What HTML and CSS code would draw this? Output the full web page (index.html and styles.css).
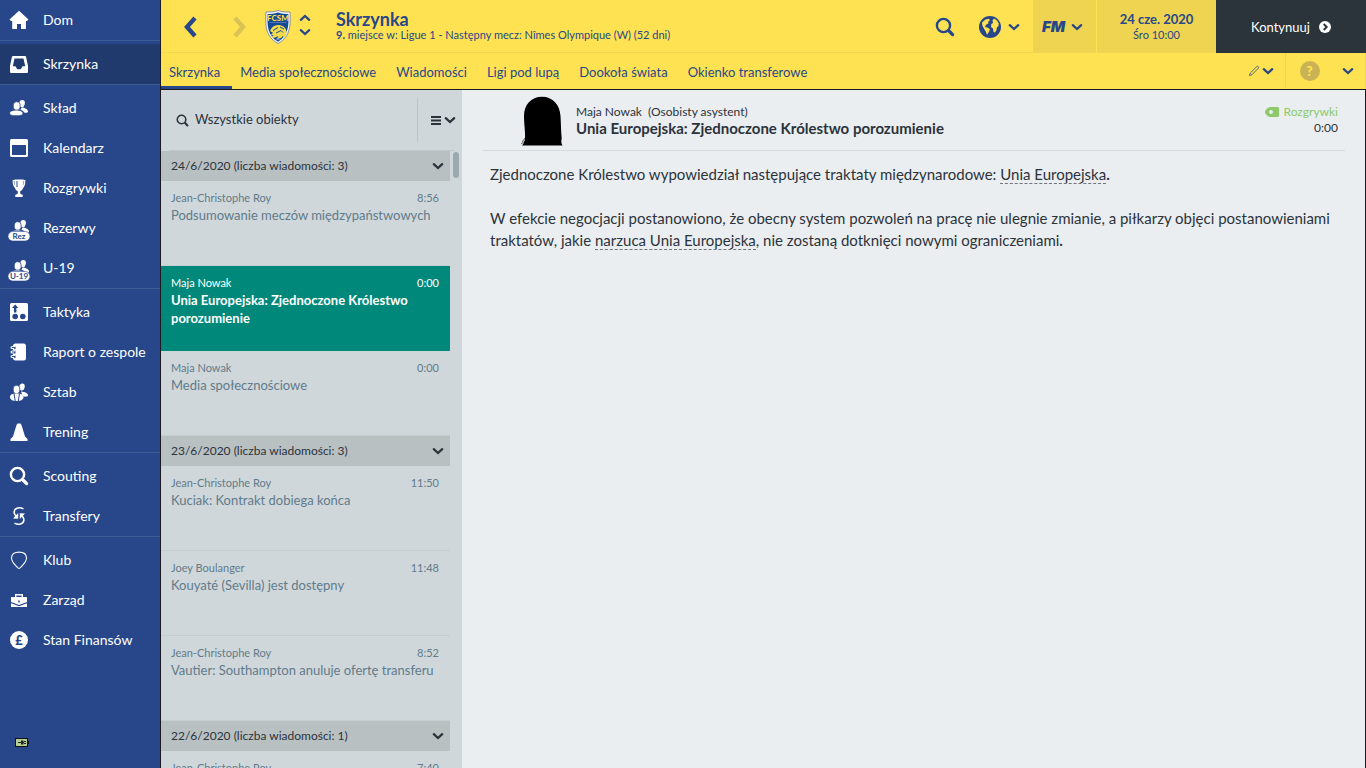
FILE: index.html
```
<!DOCTYPE html>
<html lang="pl">
<head>
<meta charset="UTF-8">
<meta name="viewport" content="width=device-width, initial-scale=1.0">
<title>Skrzynka</title>
<link rel="stylesheet" href="styles.css">
</head>
<body>

<svg class="sprite" aria-hidden="true">
    <symbol id="chevron" viewBox="0 0 14 14"><path d="M2.800 5.200L7 9l4.200-3.800" fill="none" stroke="currentColor" stroke-width="2.300" stroke-linecap="round"/></symbol>
    <symbol id="lens" viewBox="0 0 20 20"><circle cx="8.500" cy="8.500" r="6.600" fill="none" stroke="currentColor" stroke-width="2.400"/><path d="M14 14l3.600 3.600" stroke="currentColor" stroke-width="3.200" stroke-linecap="round"/></symbol>
    <symbol id="people" viewBox="0 0 20 20">
        <ellipse cx="13" cy="5.600" rx="2.800" ry="3.600" transform="rotate(12 13 5.600)"/>
        <path d="M12.500 9.500c3 0 6.500 1.800 6.500 4.200 0 1-1.800 1.200-3.500 1-1-1.600-2.400-2.600-4-3z"/>
        <ellipse cx="7.700" cy="8" rx="3.500" ry="4.300" stroke="#27478a" stroke-width="0.800"/>
        <path d="M.8 15.200c0-2 2.800-3 6.500-3s6.500 1 6.500 3-2.800 2.400-6.500 2.400-6.500-.4-6.500-2.400z" stroke="#27478a" stroke-width="0.500"/>
    </symbol>
</svg>

<div class="app">
    <nav class="sidebar">
        <ul class="nav-group">
            <li><a href="#"><svg viewBox="0 0 20 20"><path d="M10 .8L.5 9.500 2 11h1.200v7.400c0 .5.200.7.700.7H8v-5h4v5h4.200c.5 0 .7-.2.700-.7V11H18l1.500-1.500z"/></svg>Dom</a></li>
        </ul>
        <ul class="nav-group">
            <li><a class="active" href="#"><svg viewBox="0 0 20 20"><path fill-rule="evenodd" d="M4.200 2h11.600c.8 0 1.200.4 1.300 1.100L19 12v5.500c0 1-.5 1.500-1.500 1.500h-15C1.500 19 1 18.500 1 17.500V12l1.900-8.900C3 2.400 3.500 2 4.200 2zM5.500 4.500L3.800 12.300h2.700l1.700 3h3.600l1.700-3h2.700L14.500 4.500z"/></svg>Skrzynka</a></li>
        </ul>
        <ul class="nav-group">
            <li><a href="#"><svg><use href="#people"/></svg>Skład</a></li>
            <li><a href="#"><svg viewBox="0 0 20 20"><path fill-rule="evenodd" d="M3 1h14c1.400 0 2 .6 2 2v14c0 1.400-.6 2-2 2H3c-1.400 0-2-.6-2-2V3c0-1.400.6-2 2-2zm0 6v10h14V7z"/></svg>Kalendarz</a></li>
            <li><a href="#"><svg viewBox="0 0 20 20"><path d="M5.500 1.500h9v6c0 3-1.500 5-3.300 5.800V15c0 1 1 1.400 2.500 1.700V19H6.300v-2.300c1.500-.3 2.500-.7 2.500-1.700v-1.700C7 12.500 5.500 10.500 5.500 7.500z"/><path d="M6 2.500H4.200c0 4 .8 6.700 3.500 8M14 2.500h1.800c0 4-.8 6.700-3.500 8" fill="none" stroke="#fff" stroke-width="1.200"/><path d="M8 3v6" stroke="#27478a"/></svg>Rozgrywki</a></li>
            <li><a href="#"><svg class="tagged" viewBox="0 0 24 24"><use href="#people" x="3" y="0" width="20" height="20"/><rect x="1" y="13.500" width="22" height="9.500" rx="4.700" stroke="#27478a" stroke-width=".6"/><text x="12" y="21">Rez</text></svg>Rezerwy</a></li>
            <li><a href="#"><svg class="tagged" viewBox="0 0 24 24"><use href="#people" x="3" y="0" width="20" height="20"/><rect x="1" y="13.500" width="22" height="9.500" rx="4.700" stroke="#27478a" stroke-width=".6"/><text x="12" y="21">U-19</text></svg>U-19</a></li>
        </ul>
        <ul class="nav-group">
            <li><a href="#"><svg viewBox="0 0 20 20"><rect x="1" y="1" width="18" height="18" rx="1.500"/><g fill="#27478a"><circle cx="6.200" cy="14.500" r="2.800"/><circle cx="13.800" cy="14.500" r="2.800"/><path d="M6.200 2.500L3 6h2v4.500h2.400V6h2z"/></g></svg>Taktyka</a></li>
            <li><a href="#"><svg viewBox="0 0 20 20"><rect x="4" y="1.500" width="13" height="17" rx="2.500"/><g fill="none" stroke="#27478a" stroke-width="3"><path d="M2 5.500h4.500M2 10h4.500M2 14.500h4.500"/></g><g fill="none" stroke="#fff" stroke-width="1.100"><path d="M6.500 4.500H3.200c-1.500 0-1.500 2 0 2h2M6.500 9H3.200c-1.500 0-1.500 2 0 2h2M6.500 13.500H3.200c-1.500 0-1.500 2 0 2h2"/></g></svg>Raport o zespole</a></li>
            <li><a href="#"><svg viewBox="0 0 20 20"><ellipse cx="13" cy="5" rx="2.700" ry="3.600" transform="rotate(12 13 5)"/><path d="M12 9.500c4 .5 7.300 1.500 7 4.500-2.200 1-4 .8-5.500-.2z"/><ellipse cx="7.500" cy="7.500" rx="3.300" ry="4.200" stroke="#27478a" stroke-width=".8"/><path d="M1 15c0-2.500 2.500-3.600 6.500-3.600S14.500 12.500 14.500 15 12 19 7.700 19 1 17.500 1 15z"/><path d="M5 11.500l1.200 7.500M10.500 11.500L9.300 19" stroke="#27478a" stroke-width="1"/></svg>Sztab</a></li>
            <li><a href="#"><svg viewBox="0 0 20 20"><path d="M8.500 1.500h3l1 1.500 3.500 11.500 2.500 2.500v2h-17v-2L4 14.500 7.500 3z"/></svg>Trening</a></li>
        </ul>
        <ul class="nav-group">
            <li><a href="#"><svg><use href="#lens"/></svg>Scouting</a></li>
            <li><a href="#"><svg viewBox="0 0 20 20"><path d="M14.500 2.800C10 .2 4.500 2.500 5.200 7c.3 1.500 1 2.500 2.500 4M5.500 17.200c4.500 2.600 10 .3 9.300-4.200-.3-1.500-1-2.500-2.500-4" fill="none" stroke="#fff" stroke-width="1.500"/><path d="M4 12.500l5.200.2V7zM10.800 13V7.300l5.200.2z"/></svg>Transfery</a></li>
        </ul>
        <ul class="nav-group last">
            <li><a href="#"><svg viewBox="0 0 20 20"><path d="M10 2.100C5.500 2.100 2.500 4 2.500 8c0 4.500 4.500 7.500 6 9.500.8 1.100 2.200 1.100 3 0 1.500-2 6-5 6-9.500C17.500 4 14.500 2.100 10 2.100z" fill="none" stroke="#fff" stroke-width="1.100"/></svg>Klub</a></li>
            <li><a href="#"><svg viewBox="0 0 20 20"><path d="M6.700 7.500V4.700h6.600v2.800" fill="none" stroke="#fff" stroke-width="1.400"/><path d="M3 7h14c.6 0 1 .4 1 1v4l-8 3-8-3V8c0-.6.400-1 1-1zM2 13.300l8 2.900 8-2.900V17H2z"/><path d="M10 10.500v2" stroke="#27478a" stroke-width="1.500"/></svg>Zarząd</a></li>
            <li><a href="#"><svg viewBox="0 0 20 20"><circle cx="10" cy="10" r="9"/><text class="pound" x="10" y="14.500">£</text></svg>Stan Finansów</a></li>
        </ul>
        <svg class="battery" viewBox="0 0 14 9"><rect x=".5" y=".5" width="12" height="8" fill="#b4cf94" stroke="#111"/><path d="M13 3h1v3h-1z" fill="#111"/><path d="M3 4.500h3M9 3.500h2M9 5.500h2M6 4.500h3" stroke="#222"/><path d="M6 2.500h2.500v4H6z" fill="#222"/></svg>
    </nav>

    <div class="page">
        <header class="topbar">
            <button class="back" aria-label="Wstecz"><svg viewBox="0 0 16 24"><path d="M13 3L5 12l8 9" fill="none" stroke="currentColor" stroke-width="4.400"/></svg></button>
            <button class="forward" aria-label="Dalej"><svg viewBox="0 0 16 24"><path d="M3 3l8 9-8 9" fill="none" stroke="currentColor" stroke-width="4.400"/></svg></button>
            <svg class="crest" viewBox="0 0 26 34">
                <path d="M13 .5C9 2 5 2 1 2c-.8 12-.8 25 12 31.500C25.800 27 25.800 14 25 2c-4 0-8 0-12-1.500z" fill="#f4f6fa" stroke="#6c7c9d" stroke-width=".8"/>
                <path d="M13 2.500C9.500 3.600 6 4 2.700 4 2 15 2.500 26 13 31.700 23.500 26 24 15 23.300 4 20 4 16.500 3.600 13 2.500z" fill="#174a94"/>
                <text x="13" y="10.500">FCSM</text>
                <path d="M4.500 12.500h17" stroke="#4d78b5"/>
                <path d="M5 21c1.500-4.500 5-6.500 9-6 4 .3 7 3 7.500 6.500.2 3-1 5.500-3.500 7.500l.3-3.500-2.300 2.500-4 .5 1.500-2.500-4 1.800-3.500-.3 2.800-2.500-3.300.2 2.500-2.500z" fill="#f3dc4b"/>
                <path d="M8 20.500l5-3M11 23l5-2.500 2 2M15 17l4 2" stroke="#174a94" fill="none"/>
                <path d="M11.500 29h3" stroke="#d8dde8"/>
            </svg>
            <div class="stepper">
                <button aria-label="Poprzedni"><svg class="up"><use href="#chevron"/></svg></button>
                <button aria-label="Następny"><svg><use href="#chevron"/></svg></button>
            </div>
            <div class="heading">
                <h1>Skrzynka</h1>
                <p><b>9.</b> miejsce w: Ligue 1 - Następny mecz: Nîmes Olympique (W) (52 dni)</p>
            </div>
            <button class="search" aria-label="Szukaj"><svg><use href="#lens"/></svg></button>
            <button class="world" aria-label="Świat">
                <svg class="globe" viewBox="0 0 22 22"><circle cx="11" cy="11" r="11" fill="#27478a"/><path d="M3 6.500l3.500-3 3.500-.8.800 1.800-1.800 1.200.5 1.500-2.500 1.500L6 11l3 .8 2 1.700-1.300 2.700-1.700 2.600-1.300-3.300-1.200-2L3.500 10zM13.500 4.500l1.500-2 3 2 1.800 3-.5 3-1.300.5-.5 3-1.500 2.500-1.500-.5-.5-3.500-2-1.500.3-3 1.700-1z" fill="#ffe252"/></svg>
                <svg class="chev"><use href="#chevron"/></svg>
            </button>
            <button class="fm" aria-label="FM"><span>FM</span><svg class="chev"><use href="#chevron"/></svg></button>
            <div class="date"><strong>24 cze. 2020</strong><span>Śro 10:00</span></div>
            <button class="continue">Kontynuuj<svg viewBox="0 0 12 12"><circle cx="6" cy="6" r="6" fill="#fff"/><path d="M4.700 3l3 3-3 3" fill="none" stroke="#2b333b" stroke-width="1.900"/></svg></button>
        </header>

        <div class="tabbar">
            <nav class="tabs">
                <a class="active" href="#">Skrzynka</a>
                <a href="#">Media społecznościowe</a>
                <a href="#">Wiadomości</a>
                <a href="#">Ligi pod lupą</a>
                <a href="#">Dookoła świata</a>
                <a href="#">Okienko transferowe</a>
            </nav>
            <button class="edit" aria-label="Edytuj"><svg class="pencil" viewBox="0 0 12 12"><path d="M1.500 10.500l.8-2.500L9 1.400c.7-.7 2.300.8 1.600 1.600L4 9.700z" fill="none" stroke="currentColor" stroke-width=".8"/></svg><svg class="chev"><use href="#chevron"/></svg></button>
            <button class="help" aria-label="Pomoc"><span>?</span></button>
            <button class="more" aria-label="Więcej"><svg class="chev"><use href="#chevron"/></svg></button>
        </div>

        <main class="content">
            <section class="inbox">
                <div class="filter">
                    <label for="filter" aria-label="Szukaj"><svg><use href="#lens"/></svg></label>
                    <input id="filter" type="text" placeholder="Wszystkie obiekty">
                    <button aria-label="Opcje"><svg class="bars" viewBox="0 0 10 9"><path d="M0 1h10M0 4.500h10M0 8h10" stroke="currentColor" stroke-width="2"/></svg><svg class="chev"><use href="#chevron"/></svg></button>
                </div>
                <div class="scroller">
                    <div class="messages">
                        <button class="day">24/6/2020 (liczba wiadomości: 3)<svg class="chev"><use href="#chevron"/></svg></button>
                        <a class="message" href="#"><span class="from">Jean-Christophe Roy</span><time>8:56</time><span class="subject">Podsumowanie meczów międzypaństwowych</span></a>
                        <a class="message selected" href="#"><span class="from">Maja Nowak</span><time>0:00</time><span class="subject">Unia Europejska: Zjednoczone Królestwo porozumienie</span></a>
                        <a class="message" href="#"><span class="from">Maja Nowak</span><time>0:00</time><span class="subject">Media społecznościowe</span></a>
                        <button class="day">23/6/2020 (liczba wiadomości: 3)<svg class="chev"><use href="#chevron"/></svg></button>
                        <a class="message" href="#"><span class="from">Jean-Christophe Roy</span><time>11:50</time><span class="subject">Kuciak: Kontrakt dobiega końca</span></a>
                        <a class="message" href="#"><span class="from">Joey Boulanger</span><time>11:48</time><span class="subject">Kouyaté (Sevilla) jest dostępny</span></a>
                        <a class="message" href="#"><span class="from">Jean-Christophe Roy</span><time>8:52</time><span class="subject">Vautier: Southampton anuluje ofertę transferu</span></a>
                        <button class="day">22/6/2020 (liczba wiadomości: 1)<svg class="chev"><use href="#chevron"/></svg></button>
                        <a class="message" href="#"><span class="from">Jean-Christophe Roy</span><time>7:40</time></a>
                    </div>
                    <div class="scrollbar"><div class="thumb"></div></div>
                </div>
            </section>

            <article class="mail">
                <header class="mail-head">
                    <svg class="portrait" viewBox="0 0 42 50"><path d="M21 .8C10 .8 3 9 3 20c0 8 1.500 17 1 23-.5 3-1.500 5-3 6.500h40.500c-1.200-2-1.500-4-.8-7C40 36 40 28 39.500 20 38.800 9 32 .8 21 .8z"/><path d="M1 46l3-4M0 48l4-3" stroke="#000" stroke-width=".6"/></svg>
                    <div class="mail-title">
                        <p>Maja Nowak &nbsp;(Osobisty asystent)</p>
                        <h2>Unia Europejska: Zjednoczone Królestwo porozumienie</h2>
                    </div>
                    <div class="mail-meta">
                        <a href="#"><svg viewBox="0 0 14 10"><path fill-rule="evenodd" d="M5 0h7.500c1 0 1.500.5 1.500 1.500v7c0 1-.5 1.500-1.500 1.500H5C3 10 0 6.500 0 5s3-5 5-5zm1 3a2 2 0 100 4 2 2 0 000-4z"/></svg>Rozgrywki</a>
                        <time>0:00</time>
                    </div>
                </header>
                <div class="mail-body">
                    <p>Zjednoczone Królestwo wypowiedział następujące traktaty międzynarodowe: <a href="#">Unia Europejska</a><b>.</b></p>
                    <p>W efekcie negocjacji postanowiono, że obecny system pozwoleń na pracę nie ulegnie zmianie, a piłkarzy objęci postanowieniami traktatów, jakie <a href="#">narzuca Unia Europejska</a>, nie zostaną dotknięci nowymi ograniczeniami<b>.</b></p>
                </div>
            </article>
        </main>
    </div>
</div>

</body>
</html>
```
FILE: styles.css
```
:root {
    --blue: #27478a;
    --blue-dark: #203a6e;
    --yellow: #ffe252;
    --yellow-dark: #eed450;
    --dark: #2b333b;
    --green: #00897b;
    --muted: #607b8b;
}
* {
    box-sizing: border-box;
}
body {
    margin: 0;
    font-family: Lato, "Liberation Sans", sans-serif;
    font-size: 13px;
    color: var(--dark);
}
ul, p, h1, h2 {
    margin: 0;
    padding: 0;
}
a {
    color: inherit;
    text-decoration: none;
}
button {
    border: 0;
    padding: 0;
    background: none;
    font: inherit;
    color: inherit;
    cursor: pointer;
    display: flex;
    align-items: center;
    justify-content: center;
}
svg {
    display: block;
    flex: none;
}
.sprite {
    position: absolute;
    width: 0;
    height: 0;
}
.chev {
    width: 14px;
    height: 14px;
}
.app {
    display: flex;
    height: 100vh;
    overflow: hidden;
}

/* left menu */
.sidebar {
    width: 161px;
    flex: none;
    display: flex;
    flex-direction: column;
    background: var(--blue);
    border-right: 1px solid #1c1a20;
    color: #fff;
    fill: #fff;
}
.nav-group {
    list-style: none;
    border-bottom: 1px solid #3f5c98;
    margin-bottom: 3px;
}
.nav-group.last {
    border-bottom: 0;
}
.nav-group a {
    display: flex;
    align-items: center;
    height: 40px;
    padding: 0 0 2px 9px;
    gap: 14px;
    font-size: 14px;
}
.nav-group a.active {
    background: var(--blue-dark);
}
.nav-group svg {
    width: 20px;
    height: 20px;
    margin-top: 2px;
}
.nav-group svg.tagged {
    width: 24px;
    height: 24px;
    margin: 6px -2px 0;
}
.tagged text {
    font-size: 8px;
    font-weight: bold;
    text-anchor: middle;
    fill: var(--blue);
}
.pound {
    font-size: 13px;
    font-weight: 900;
    text-anchor: middle;
    fill: var(--blue);
}
.battery {
    width: 14px;
    height: 9px;
    margin: auto 0 21px 15px;
}

/* title bar */
.page {
    flex: 1;
    min-width: 0;
    display: flex;
    flex-direction: column;
}
.topbar {
    height: 53px;
    flex: none;
    display: flex;
    align-items: stretch;
    background: var(--yellow);
    border-bottom: 1px solid #f3d750;
    color: var(--blue);
}
.back, .forward {
    width: 16px;
    margin: 2px 0 0 21px;
}
.forward {
    margin-left: 34px;
    color: #d9c256;
}
.back svg, .forward svg {
    width: 16px;
    height: 24px;
}
.crest {
    width: 26px;
    height: 34px;
    margin: 10px 0 0 17px;
}
.crest text {
    font-size: 8px;
    font-weight: 900;
    text-anchor: middle;
    fill: #f3dc4b;
}
.stepper {
    display: flex;
    flex-direction: column;
    margin: 11px 0 0 7px;
}
.stepper svg {
    width: 14px;
    height: 14px;
}
.stepper .up {
    transform: rotate(180deg);
}
.heading {
    flex: 1;
    margin: 9px 0 0 24px;
    white-space: nowrap;
}
.heading h1 {
    font-size: 18px;
    line-height: 20px;
}
.heading p {
    font-size: 11px;
    line-height: 12px;
}
.search {
    width: 20px;
    margin: 2px 24px 0 0;
}
.search svg {
    width: 20px;
    height: 20px;
}
.world {
    width: 42px;
    height: 53px;
    gap: 6px;
    margin-right: 12px;
}
.globe {
    width: 22px;
    height: 22px;
}
.fm {
    width: 64px;
    height: 53px;
    padding-left: 9px;
    justify-content: flex-start;
    gap: 5px;
    background: var(--yellow-dark);
    border-right: 1px solid var(--yellow);
}
.fm span {
    font-family: Inter, Lato, sans-serif;
    font-size: 15px;
    font-weight: 900;
    font-style: italic;
}
.date {
    width: 119px;
    height: 53px;
    display: flex;
    flex-direction: column;
    align-items: center;
    justify-content: center;
    background: var(--yellow-dark);
}
.date strong {
    line-height: 16px;
}
.date span {
    font-size: 11px;
    line-height: 15px;
}
.continue {
    width: 150px;
    height: 53px;
    gap: 9px;
    background: var(--dark);
    color: #fff;
}
.continue svg {
    width: 12px;
    height: 12px;
}

/* tabs */
.tabbar {
    height: 37px;
    flex: none;
    display: flex;
    align-items: stretch;
    background: var(--yellow);
    border-bottom: 1px solid #1c1a20;
    color: var(--blue);
}
.tabs {
    flex: 1;
    display: flex;
}
.tabs a {
    padding: 10px 12px 0 8px;
    line-height: 18px;
    white-space: nowrap;
}
.tabs .active {
    border-bottom: 3px solid var(--blue);
}
.edit {
    width: 37px;
    gap: 1px;
    justify-content: flex-start;
}
.pencil {
    width: 12px;
    height: 12px;
}
.help {
    width: 48px;
    border-left: 1px solid var(--yellow-dark);
}
.help span {
    width: 20px;
    line-height: 20px;
    border-radius: 50%;
    background: #c9b355;
    color: var(--yellow);
    font-size: 14px;
    font-weight: 900;
}
.more {
    width: 33px;
    padding-right: 3px;
    border-right: 1px solid var(--yellow-dark);
}

/* message list */
.content {
    flex: 1;
    min-height: 0;
    display: flex;
    border-right: 1px solid #1c1a20;
}
.inbox {
    width: 301px;
    flex: none;
    display: flex;
    flex-direction: column;
    background: #d0d7da;
}
.filter {
    display: flex;
    align-items: center;
    height: 61px;
    flex: none;
    margin: 0 8px;
    border-bottom: 1px solid #bfc7ca;
}
.filter label svg {
    width: 13px;
    height: 13px;
    margin: 0 6px 0 7px;
}
.filter input {
    flex: 1;
    min-width: 0;
    border: 0;
    padding: 0 0 2px;
    background: none;
    font: inherit;
    color: inherit;
}
.filter input::placeholder {
    color: var(--dark);
    opacity: 1;
}
.filter button {
    height: 44px;
    width: 37px;
    padding-left: 13px;
    gap: 2px;
    border-left: 1px solid #bcc4c7;
    justify-content: flex-start;
}
.bars {
    width: 10px;
    height: 9px;
}
.scroller {
    flex: 1;
    min-height: 0;
    display: flex;
    overflow: hidden;
}
.messages {
    flex: 1;
}
.day {
    width: 100%;
    height: 30px;
    padding: 0 5px 2px 10px;
    justify-content: space-between;
    background: #b9c0c2;
    font-size: 12px;
}
.day svg {
    margin-top: 2px;
}
.message {
    display: grid;
    grid-template-columns: 1fr auto;
    align-content: start;
    height: 85px;
    padding: 9px 11px 0 10px;
    border-bottom: 1px solid #c5cdd0;
    color: var(--muted);
}
.message .from, .message time {
    font-size: 11px;
    line-height: 16px;
}
.message .subject {
    grid-column: 1 / 3;
    line-height: 18px;
}
.selected {
    background: var(--green);
    border-color: var(--green);
    color: #fff;
}
.selected .subject {
    font-weight: bold;
}
.scrollbar {
    width: 12px;
    padding: 1px 3px;
}
.thumb {
    height: 26px;
    border-radius: 3px;
    background: #9ba9b0;
}

/* opened message */
.mail {
    flex: 1;
    min-width: 0;
    padding: 0 20px;
    background: #ebeef1;
}
.mail-head {
    display: flex;
    align-items: flex-start;
    height: 61px;
    padding: 0 7px 0 39px;
    border-bottom: 1px solid #d5dadd;
}
.portrait {
    width: 42px;
    height: 50px;
    margin-top: 6px;
}
.mail-title {
    flex: 1;
    margin: 14px 0 0 13px;
}
.mail-title p {
    font-size: 12px;
    line-height: 16px;
}
.mail-title h2 {
    font-size: 15px;
    line-height: 17px;
}
.mail-meta {
    margin-top: 14px;
    text-align: right;
    font-size: 12px;
    line-height: 16px;
}
.mail-meta a {
    display: flex;
    align-items: center;
    gap: 5px;
    color: #8bc96b;
    fill: #8bc96b;
}
.mail-meta svg {
    width: 14px;
    height: 10px;
}
.mail-body {
    padding: 12px 8px;
    font-size: 15px;
    line-height: 22px;
}
.mail-body p + p {
    margin-top: 22px;
}
.mail-body a {
    border-bottom: 1px dashed #6d757b;
}
```
